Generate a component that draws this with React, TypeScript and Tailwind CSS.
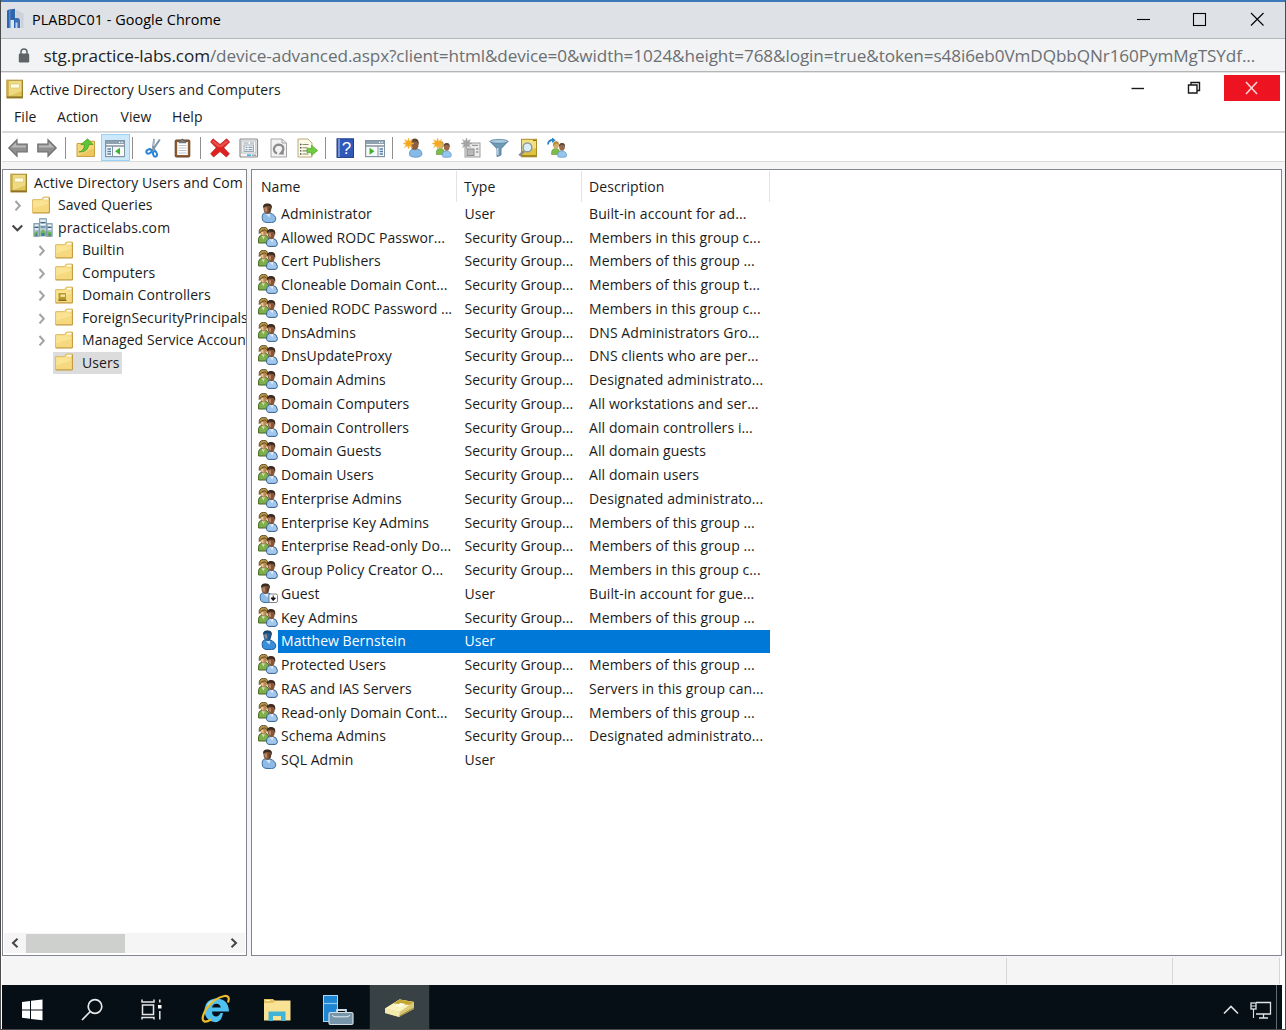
import React from "react";

type Kind = "user" | "group" | "guest" | "selected";

const GROUP = "Security Group...";

const rows: [Kind, string, string, string][] = [
  ["user", "Administrator", "User", "Built-in account for ad..."],
  ["group", "Allowed RODC Passwor...", GROUP, "Members in this group c..."],
  ["group", "Cert Publishers", GROUP, "Members of this group ..."],
  ["group", "Cloneable Domain Cont...", GROUP, "Members of this group t..."],
  ["group", "Denied RODC Password ...", GROUP, "Members in this group c..."],
  ["group", "DnsAdmins", GROUP, "DNS Administrators Gro..."],
  ["group", "DnsUpdateProxy", GROUP, "DNS clients who are per..."],
  ["group", "Domain Admins", GROUP, "Designated administrato..."],
  ["group", "Domain Computers", GROUP, "All workstations and ser..."],
  ["group", "Domain Controllers", GROUP, "All domain controllers i..."],
  ["group", "Domain Guests", GROUP, "All domain guests"],
  ["group", "Domain Users", GROUP, "All domain users"],
  ["group", "Enterprise Admins", GROUP, "Designated administrato..."],
  ["group", "Enterprise Key Admins", GROUP, "Members of this group ..."],
  ["group", "Enterprise Read-only Do...", GROUP, "Members of this group ..."],
  ["group", "Group Policy Creator O...", GROUP, "Members in this group c..."],
  ["guest", "Guest", "User", "Built-in account for gue..."],
  ["group", "Key Admins", GROUP, "Members of this group ..."],
  ["selected", "Matthew Bernstein", "User", ""],
  ["group", "Protected Users", GROUP, "Members of this group ..."],
  ["group", "RAS and IAS Servers", GROUP, "Servers in this group can..."],
  ["group", "Read-only Domain Cont...", GROUP, "Members of this group ..."],
  ["group", "Schema Admins", GROUP, "Designated administrato..."],
  ["user", "SQL Admin", "User", ""],
];

const tree = ["Builtin", "Computers", "Domain Controllers", "ForeignSecurityPrincipals", "Managed Service Accounts", "Users"];

/* ---------- people ---------- */

function Person({ x = 0, y = 0, body = "#8fbbe6", edge = "#3d6f9f", head = "#85593c", hair = "#3a2b21" }) {
  return (
    <g transform={`translate(${x} ${y})`}>
      <path d="M1.6 17 Q0 10.5 4 9.6 L8.6 9.6 Q14.6 11.6 14.8 16 Q14.6 19.3 10.6 19.4 L5 19.2 Q2.2 18.8 1.6 17Z" fill={body} stroke={edge} />
      <path d="M4.6 10.5 L8.4 14.5 L9.4 10.8Z" fill="#e6f1fa" opacity=".8" />
      <path d="M2.2 3.5 Q2.2 0.8 5.8 0.6 Q10.7 0.4 10.6 3.6 L10 7.5 Q8.8 10.8 6.4 10.8 Q3.6 10.6 2.8 7.5Z" fill={head} />
      <path d="M2.2 4.6 Q1.6 .5 6.2 .3 Q11.6 .2 10.9 5.6 L9.6 3.2 L5 2.8Z" fill={hair} />
      <path d="M7.6 4 L10.6 4.5 L9.4 9 L7.6 10.5Z" fill={hair} opacity=".55" />
      <path d="M3.2 4.4 L6 4.2 L6.2 8.6 L4.2 8.2Z" fill="#d9a983" opacity=".6" />
    </g>
  );
}

function UserIcon({ kind }: { kind: Kind }) {
  if (kind === "group") {
    return (
      <svg width="20" height="20" viewBox="0 0 20 20" className="mb-[2px]">
        <path d="M0.6 16 V11.5 Q1 8.6 4 8.4 H8 Q10.5 9 10.8 12 V16Z" fill="#7fae4b" stroke="#47661f" />
        <path d="M3.5 9 L5.5 12.5 L7 9Z" fill="#cfe3b4" />
        <path d="M1.6 3 Q2 .4 5.5 .4 Q9.4 .6 9.2 4 Q9 9.4 6 9.6 Q2.2 9.4 1.6 3Z" fill="#b98a52" />
        <path d="M1.2 6.5 Q.6 .3 5.6 .3 Q10.4 .3 9.4 5 L7 2.8 L4 3.6Z" fill="#b3954a" stroke="#4f3d1b" strokeWidth=".8" />
        <path d="M3 5H5.4L5.4 8.2L3.6 7.6Z" fill="#ecca9a" />
        <path d="M8.6 17.5 Q8.2 12.4 11.4 11.6 H15.4 Q19 12.4 19.4 16.6 Q19.4 19.3 17 19.4 H11 Q9 19.2 8.6 17.5Z" fill="#a3c8ee" stroke="#355f8b" />
        <path d="M12 12 L14.3 15.4 L15.4 12Z" fill="#e3f0fb" />
        <path d="M9.2 5 Q9.4 2.2 13 2.2 Q17.2 2.2 17 6 Q16.6 12 13.6 12.2 Q10 12 9.2 5Z" fill="#855539" />
        <path d="M9 6.5 Q8.6 1.9 13.2 1.9 Q18 1.9 17.2 8 L15.6 5 L11 4.6Z" fill="#3a2a20" />
        <path d="M10.4 6.2H13V10.2L11.2 9.2Z" fill="#c89573" opacity=".85" />
      </svg>
    );
  }
  if (kind === "selected") {
    return (
      <svg width="20" height="20" viewBox="0 0 20 20" className="mb-[2px]">
        <Person x={3} y={0.2} body="#3a8fdb" edge="#1c5d9d" head="#2a6499" hair="#1b466c" />
      </svg>
    );
  }
  return (
    <svg width="20" height="20" viewBox="0 0 20 20" className="mb-[2px]">
      <Person x={kind === "guest" ? 1 : 3} y={0.2} />
      {kind === "guest" && (
        <g>
          <rect x="11" y="11" width="8.5" height="8.5" rx="1.5" fill="#fff" stroke="#666" strokeWidth=".8" />
          <path d="M15.2 12.5v4M13 15l2.2 2.6L17.4 15Z" stroke="#111" fill="#111" strokeWidth="1" />
        </g>
      )}
    </svg>
  );
}

/* ---------- tree ---------- */

function Folder({ unit = false }) {
  return (
    <svg width="19" height="19" viewBox="0 0 19 19" className="shrink-0">
      <path d="M.7 16.8 V3.7 H9.4 L11.4 1.1 H17.3 V16.8Z" fill="#f8dc84" stroke="#d9b65a" />
      <path d="M1.2 4.5 H11 L13 6 H16.8 V16.3 H1.2Z" fill="#fbe394" />
      <path d="M1.2 12.5 L16.8 7.5 V16.3 H1.2Z" fill="#f4d172" opacity=".6" />
      <path d="M12 2.7h4.4" stroke="#fff" strokeWidth="1.6" />
      <path d="M.7 16.9H17.4V1.5" fill="none" stroke="#c09a40" strokeWidth="1" />
      {unit && (
        <g>
          <rect x="3.5" y="7" width="7.5" height="7.5" fill="#b79a2c" />
          <rect x="5.5" y="8.5" width="4.5" height="2.4" fill="#f3e6a0" />
          <path d="M3.5 14.3h8" stroke="#6f5d20" />
        </g>
      )}
    </svg>
  );
}

function Book({ className = "" }) {
  return (
    <svg width="18" height="20" viewBox="0 0 18 20" className={className}>
      <rect x="1" y="1.2" width="15.5" height="17.8" fill="#dfc65d" stroke="#a88b33" />
      <rect x=".5" y=".8" width="2" height="18" fill="#c7aa48" />
      <path d="M3 2h13v10L3 17Z" fill="#f0de8c" opacity=".8" />
      <rect x="4.5" y="5" width="9" height="4" fill="#fffbe0" stroke="#d8c070" strokeWidth=".6" />
      <path d="M1 18.2h15.5" stroke="#8d7226" strokeWidth="1.6" />
      <path d="M16.2 2v17" stroke="#9b7f2c" />
    </svg>
  );
}

function Domain() {
  return (
    <svg width="20" height="20" viewBox="0 0 20 20" className="shrink-0">
      <path d="M6.5 18V.5H13.5V18Z" fill="#b7ccd9" stroke="#7c97a8" strokeWidth=".8" />
      <path d="M.8 18.5V5.5H6.3V18.5ZM13.7 18.5V5.5H19.2V18.5Z" fill="#a9c0cf" stroke="#7893a6" strokeWidth=".8" />
      <path d="M7.5 3h5M7.5 6.5h5M2 7.5h3.4M2 11h3.4M15 7.5h3.4M15 11h3.4" stroke="#f4fafc" strokeWidth="1.4" />
      <path d="M7.5 4.6h5M7.5 9h5M1.5 9.3h4M14.5 9.3h4" stroke="#3f627c" strokeWidth="1.2" />
      <path d="M1.3 18V14.5L5 13V18ZM7.5 18V13.5L10 11.5L12.8 13.5V18ZM14.3 18V13L18.8 14.5V18Z" fill="#6cb854" />
      <path d="M8.5 18V15H11.5V18ZM2.5 18V15.5H4V18ZM15.8 18V15.5H17.5V18Z" fill="#4b7b9a" />
    </svg>
  );
}

function Chevron({ open = false, dark = false }) {
  return (
    <svg width="12" height="12" viewBox="0 0 12 12" fill="none" className="shrink-0" stroke={open || dark ? "#454545" : "#a3a3a3"} strokeWidth="2">
      <path d={open ? "M1.6 3.5L6.4 8.3L11.2 3.5" : dark ? "M3.5 1.8L8 6L3.5 10.2" : "M3.5 2L7.8 6.7L3.5 11.4"} />
    </svg>
  );
}

/* ---------- toolbar ---------- */

function Ico({ children, w = 20 }: { children: React.ReactNode; w?: number }) {
  return (
    <svg width={w} height="20" viewBox={`0 0 ${w} 20`} className="shrink-0" fill="none">
      {children}
    </svg>
  );
}

const Arrow = ({ flip = false }) => (
  <Ico>
    <g transform={flip ? "translate(20 0) scale(-1 1)" : undefined}>
      <path d="M.8 10L9 1.8V6H19.2V14H9V18.2Z" fill="#8f8f8f" stroke="#6f6f6f" strokeWidth="1.2" />
      <path d="M2.6 9.6L8.2 4.4V7.4H18V9.6Z" fill="#b9b9b9" />
    </g>
  </Ico>
);

const Divider = ({ className = "" }) => <span className={`h-[22px] w-px shrink-0 bg-[#8f8f8f] ${className}`} />;

function Star({ gray = false }) {
  return (
    <path
      d="M5.5 0L6.5 3.2L9.4 1.6L7.8 4.5L11 5.5L7.8 6.5L9.4 9.4L6.5 7.8L5.5 11L4.5 7.8L1.6 9.4L3.2 6.5L0 5.5L3.2 4.5L1.6 1.6L4.5 3.2Z"
      fill={gray ? "#a3a3a3" : "#f5a81c"}
      stroke={gray ? "#a3a3a3" : "#f5b84a"}
      strokeWidth=".6"
    />
  );
}

function Couple({ x = 0, y = 0 }) {
  return (
    <g transform={`translate(${x} ${y})`}>
      <path d="M0 12Q0 7.5 4 7.5Q8 7.5 8 12V13.5H0Z" fill="#7dbb4a" stroke="#5c9434" strokeWidth=".6" />
      <ellipse cx="4.4" cy="4.2" rx="2.8" ry="3.5" fill="#d3ac68" />
      <path d="M1.4 5Q1 .3 4.6 .3Q7.8 .5 7.3 4L5 2.2Z" fill="#b58a38" />
      <path d="M6 14.5Q5.8 10.2 10 9.8Q15 10.2 15 14.5Q15 16.3 12 16.3H8Q6 16.3 6 14.5Z" fill="#93c5ee" stroke="#5c93c4" strokeWidth=".7" />
      <ellipse cx="10.4" cy="6" rx="2.8" ry="3.8" fill="#98694a" />
      <path d="M7.3 6Q7 2 10.6 2Q14 2 13.3 6.5L12 4L9 4Z" fill="#5b4636" />
    </g>
  );
}

function Pane({ flip = false }) {
  return (
    <Ico>
      <rect x="0.6" y="2.6" width="19" height="16" fill="#f7f9fb" stroke="#8293a2" strokeWidth="1.2" />
      <rect x="1" y="3" width="18" height="3" fill="#8fa1b1" />
      <path d="M14 4.4h1.2M16.5 4.4h1.2" stroke="#fff" strokeWidth="1.4" />
      <path d="M1 8h18" stroke="#7a8b99" strokeWidth="1.4" />
      {flip ? (
        <g>
          <path d="M13 8V18" stroke="#8293a2" />
          <path d="M14.6 11h3.4M14.6 13.5h3.4M14.6 16h3.4" stroke="#557fa8" strokeWidth="1.3" />
          <path d="M4.5 9.7V16.7L9.5 13.2Z" fill="#3fb32b" />
        </g>
      ) : (
        <g>
          <path d="M7.5 8V18" stroke="#8293a2" />
          <path d="M2.4 11H6M2.4 13.5H6M2.4 16H6" stroke="#557fa8" strokeWidth="1.3" />
          <path d="M15 9.7V16.7L10 13.2Z" fill="#3fb32b" />
        </g>
      )}
    </Ico>
  );
}

function Toolbar() {
  return (
    <div className="flex h-[27px] shrink-0 items-center pl-[6px]">
      <Arrow />
      <span className="w-[9px]" />
      <Arrow flip />
      <Divider className="ml-[8px] mr-[10px]" />
      <Ico>
        <path d="M1 18.5V5.5H8L10 3.2H18.5V18.5Z" fill="#f4d778" stroke="#c9a23f" />
        <path d="M1.5 18L18 10V18Z" fill="#e9bf58" opacity=".7" />
        <path d="M3 14Q8 13 8.6 6.6H4.8L11.6 .8L17 6.6H12.8Q12 14.5 3 14Z" fill="#5fc437" stroke="#3d9a21" strokeWidth=".7" />
      </Ico>
      <div className="ml-[4.5px] flex h-[27px] w-[29px] items-center justify-center border border-[#99d1f5] bg-[#cce8fb]">
        <Pane />
      </div>
      <Divider className="ml-[2.5px] mr-[11px]" />
      <Ico>
        <path d="M10.2 1L9 9.5L11.2 13M15.8 1.5L8 13" stroke="#7e95a8" strokeWidth="2" />
        <path d="M10.4 1.5L9.5 8" stroke="#d4dfe8" strokeWidth=".8" />
        <ellipse cx="5" cy="13.4" rx="2.8" ry="2" transform="rotate(-25 5 13.4)" stroke="#2a83d6" strokeWidth="2" />
        <ellipse cx="11" cy="16" rx="1.9" ry="2.7" transform="rotate(-15 11 16)" stroke="#2a83d6" strokeWidth="2" />
      </Ico>
      <span className="w-[9px]" />
      <Ico>
        <rect x="2.2" y="2" width="14.6" height="17" rx="1" fill="#8d5c35" stroke="#6a4325" />
        <rect x="4.2" y="4" width="10.6" height="13" fill="#fff" />
        <path d="M5.5 7.5h8M5.5 10h8M5.5 12.5h8M5.5 15h8" stroke="#bcc3ca" />
        <path d="M6 4.8V2.6H8Q9.5-.6 11 2.6H13V4.8Z" fill="#777" stroke="#555" strokeWidth=".7" />
      </Ico>
      <Divider className="ml-[7px] mr-[9px]" />
      <Ico>
        <path d="M3 .8L10 6.4L16.6 .8L19.6 4L13.8 9.8L19.4 15.8L16.4 19L10 13.6L3.6 19L.6 15.8L6.2 9.8L.6 4Z" fill="#dc2322" stroke="#b91c1c" strokeWidth=".7" />
        <path d="M3.2 2L10 7.6L16.4 2.2L18 4L12 9H8L2 4Z" fill="#f26460" opacity=".7" />
      </Ico>
      <span className="w-[9px]" />
      <Ico>
        <rect x="1" y="1" width="17.5" height="18" rx="1" fill="#f4f4f4" stroke="#8b8b8b" strokeWidth="1.2" />
        <rect x="2.8" y="3" width="14" height="12" fill="#fff" stroke="#b5bcc2" />
        <rect x="5" y="7" width="9.5" height="6.5" fill="#f4f8fb" stroke="#97a7b4" />
        <path d="M4.5 5h5M11 5h4M6.5 9.4h2M9.5 9.4h4M6.5 11.6h2M9.5 11.6h4" stroke="#8a9aa7" strokeWidth="1.1" />
        <path d="M8 17.2h4" stroke="#3eb4e6" strokeWidth="1.6" />
        <path d="M13 17.2h4" stroke="#9aa3aa" strokeWidth="1.4" />
      </Ico>
      <span className="w-[10px]" />
      <Ico>
        <path d="M2 1H13L17.5 5V19H2Z" fill="#f3f3f3" stroke="#a5a5a5" />
        <path d="M13 1V5H17.5" stroke="#a5a5a5" />
        <path d="M8 15.5Q4.6 14 5 10.4Q6.2 6.6 9.8 6.6Q14.4 7 14.4 11Q14.2 12.6 13 14" stroke="#8c8c8c" strokeWidth="2.2" />
        <path d="M15 16.6H9.4L14 11Z" fill="#8c8c8c" />
      </Ico>
      <span className="w-[8px]" />
      <Ico w={21}>
        <path d="M1 1H11L15 5V19H1Z" fill="#fdfbe9" stroke="#b8aa78" />
        <path d="M3 6.5h1.4M3 9.7h1.4M3 12.9h1.4M3 16h1.4" stroke="#444" strokeWidth="1.4" />
        <path d="M5.5 6.5h6M5.5 9.7h5M5.5 12.9h5M5.5 16h6" stroke="#8b8b72" strokeWidth="1.1" />
        <path d="M10 10.4H14.6V7.4L20.6 12.5L14.6 17.4V14.6H10Z" fill="#6fcc3f" stroke="#49a323" strokeWidth=".7" />
      </Ico>
      <Divider className="ml-[7px] mr-[10px]" />
      <Ico>
        <rect x="1" y=".8" width="16.5" height="18.6" fill="#3159b8" stroke="#1f3c86" />
        <path d="M2 1H4V19H2Z" fill="#7593d8" />
        <text x="5.8" y="16" fontSize="17" fill="#fff" fontFamily="Liberation Sans, sans-serif">?</text>
      </Ico>
      <span className="w-[9px]" />
      <Pane flip />
      <Divider className="ml-[7px] mr-[10px]" />
      <Ico>
        <path d="M6.5 17Q6 11 11.4 10.6Q18.6 10.6 19 16Q18.6 19.2 13 19.2Q7.4 19.2 6.5 17Z" fill="#86b9e6" stroke="#5990c2" strokeWidth=".8" />
        <ellipse cx="11.6" cy="6.6" rx="4" ry="5.4" fill="#8c5e40" />
        <path d="M7.4 5Q8 .6 12 .6Q16.4 1 15.6 6.5L14 3.4H9Z" fill="#5a4536" />
        <Star />
      </Ico>
      <span className="w-[9px]" />
      <Ico>
        <Couple x={4.3} y={3} />
        <Star />
      </Ico>
      <span className="w-[9px]" />
      <Ico>
        <rect x="4" y="5" width="15" height="14" fill="#ececec" stroke="#9b9b9b" />
        <rect x="6" y="11" width="7" height="6.5" fill="#b9b9b9" stroke="#8b8b8b" />
        <path d="M11 7.4h6M15 11h2.4M15 14h2.4" stroke="#999" strokeWidth="1.4" />
        <Star gray />
      </Ico>
      <span className="w-[8px]" />
      <Ico>
        <path d="M1 3.4L8 10.8V18.6L12 17V10.8L19 3.4Z" fill="#6e9ab8" stroke="#47708f" strokeWidth=".8" />
        <ellipse cx="10" cy="3.4" rx="9" ry="2" fill="#a9c9dc" stroke="#54809f" strokeWidth=".8" />
        <path d="M8.8 10V17" stroke="#cde2ef" strokeWidth="1.2" />
      </Ico>
      <span className="w-[9px]" />
      <Ico>
        <rect x="3.5" y="1.3" width="15" height="17.5" fill="#dfc33f" stroke="#a98f26" />
        <path d="M4 2H18V10L4 14Z" fill="#f1df81" />
        <path d="M15 2.5h3M4 17.8h14" stroke="#8f7718" strokeWidth="1.2" />
        <path d="M1.4 17.6L6 13" stroke="#8c8c8c" strokeWidth="2.6" />
        <circle cx="9.4" cy="9.4" r="4.4" fill="#d9eef6" stroke="#8a9aa2" strokeWidth="1.5" />
      </Ico>
      <span className="w-[9px]" />
      <Ico>
        <Couple x={4.6} y={3} />
        <path d="M1 6.5Q1 2 6 2" stroke="#2c83c4" strokeWidth="1.8" />
        <path d="M5 -.6L8.6 2.2L5 5Z" fill="#2c83c4" />
      </Ico>
    </div>
  );
}

/* ---------- frames ---------- */

function BrowserChrome() {
  return (
    <div className="shrink-0 font-['Open_Sans',sans-serif]">
      <div className="flex h-[39px] items-center border-t-2 border-b border-t-[#3c78b8] border-b-[#b4b6ba] bg-[#dee1e6] pb-[2px] text-black">
        <svg width="20" height="22" viewBox="0 0 20 22" className="ml-[5px]">
          <path d="M1 2.5L3 1.5L9 .8V20H1Z" fill="#2e66ad" />
          <path d="M3.8 2V20" stroke="#7da0cf" strokeWidth=".8" />
          <path d="M9 10Q14 9 14 13V20H9Z" fill="#3d70b2" />
          <path d="M4.5 12H8V20H4.5Z" fill="#dce6f2" />
          <path d="M9.5 1.5L15 4V10H9.5ZM14.5 5H17.5V20H14.5Z" fill="#cdd2da" />
          <path d="M9.5 14.5H11.5V20H9.5Z" fill="#bfd1e8" />
        </svg>
        <span className="ml-[6px] mt-px whitespace-pre text-[14.4px] tracking-[0.06px]">PLABDC01 - Google Chrome</span>
        <svg width="130" height="20" viewBox="0 0 130 20" className="ml-auto mr-[20px]" fill="none" stroke="#000" strokeWidth="1.1">
          <path d="M2 10.5H15" />
          <rect x="58.5" y="4.5" width="12" height="12" />
          <path d="M116 4L128.5 16.5M128.5 4L116 16.5" />
        </svg>
      </div>
      <div className="flex h-[33px] items-center border-b border-[#b5b5b5] bg-[#f1f3f4] pl-[17px] pt-px">
        <svg width="12" height="15" viewBox="0 0 12 15" className="shrink-0">
          <path d="M3 6V4Q3 1 6 1Q9 1 9 4V6" fill="none" stroke="#5f6368" strokeWidth="1.5" />
          <rect x=".8" y="5.5" width="10.4" height="9" rx="1.2" fill="#5f6368" />
        </svg>
        <span className="ml-[13.5px] whitespace-pre text-[17.15px] tracking-[-0.1px] text-[#6b6f73]">
          <span className="text-[#202124]">stg.practice-labs.com</span>
          /device-advanced.aspx?client=html&amp;device=0&amp;width=1024&amp;height=768&amp;login=true&amp;token=s48i6eb0VmDQbbQNr160PymMgTSYdf...
        </span>
      </div>
    </div>
  );
}

function TreePanel() {
  return (
    <div className="flex w-[245px] shrink-0 flex-col overflow-hidden border border-[#82878f] bg-white p-px">
      <div className="flex flex-col pt-[0.6px]">
        <div className="flex h-[22.5px] items-center pl-[6px]">
          <Book className="shrink-0" />
          <span className="ml-[6px] whitespace-pre tracking-[0.1px]">Active Directory Users and Com</span>
        </div>
        <div className="flex h-[22.5px] items-center pl-[8px]">
          <Chevron />
          <span className="w-[8px]" />
          <Folder />
          <span className="ml-[7px] whitespace-pre">Saved Queries</span>
        </div>
        <div className="flex h-[22.5px] items-center pl-[7px]">
          <Chevron open />
          <span className="w-[10px]" />
          <Domain />
          <span className="ml-[5px] whitespace-pre tracking-[0.13px]">practicelabs.com</span>
        </div>
        {tree.map((name, i) => (
          <div key={name} className="flex h-[22.5px] items-center pl-[32px]">
            {name === "Users" ? <span className="w-[12px] shrink-0" /> : <Chevron />}
            <div className={name === "Users" ? "ml-[5px] flex h-[22px] items-center bg-[#dcdcdc] pl-[2px] pr-[3px]" : "ml-[7px] flex items-center"}>
              <Folder unit={i === 2} />
              <span className="ml-[8px] whitespace-pre">{name}</span>
            </div>
          </div>
        ))}
      </div>
      <div className="mb-px mt-auto flex h-[20px] items-center bg-[#f5f5f5] pl-[5px] pr-[5px]">
        <span className="flex rotate-180"><Chevron dark /></span>
        <span className="ml-[5px] h-[19px] w-[99px] bg-[#cdd0cd]" />
        <span className="ml-auto flex"><Chevron dark /></span>
      </div>
    </div>
  );
}

function ListPanel() {
  return (
    <div className="mr-[3px] flex-1 border border-[#82878f] bg-white p-px">
      <div className="flex h-[31px] items-center">
        <span className="flex h-full w-[204px] items-center border-r border-[#e3e3e3] pl-[8px]">Name</span>
        <span className="flex h-full w-[125px] items-center border-r border-[#e3e3e3] pl-[7px]">Type</span>
        <span className="flex h-full w-[188px] items-center border-r border-[#e3e3e3] pl-[7px]">Description</span>
      </div>
      {rows.map(([kind, name, type, desc]) => (
        <div key={name} className="flex h-[23.76px] w-[516.5px] items-center pl-[5px]">
          <UserIcon kind={kind} />
          <div className={kind === "selected" ? "flex h-full flex-1 items-center bg-[#0078d7] text-white" : "flex h-full flex-1 items-center"}>
            <span className="w-[186.5px] whitespace-pre pl-[3px] tracking-[0.04px]">{name}</span>
            <span className="w-[124.5px] whitespace-pre tracking-[0.02px]">{type}</span>
            <span className="whitespace-pre tracking-[0.09px]">{desc}</span>
          </div>
        </div>
      ))}
    </div>
  );
}

function Taskbar() {
  return (
    <div className="mr-[3px] flex h-[44px] shrink-0 items-center bg-[#070f16]">
      <svg width="60" height="44" viewBox="0 0 60 44" fill="#fff">
        <path d="M20 17L28 16V24.4H20ZM29 15.8L40.5 14.4V24.4H29ZM20 25.4H28V33.8L20 32.8ZM29 25.4H40.5V35.2L29 34Z" />
      </svg>
      <svg width="60" height="44" viewBox="0 0 60 44" fill="none" stroke="#e5e7e9" strokeWidth="1.7">
        <circle cx="33" cy="21.5" r="6.8" />
        <path d="M28.3 26.5L20 35" />
      </svg>
      <svg width="60" height="44" viewBox="0 0 60 44" fill="none" stroke="#e5e7e9" strokeWidth="1.5">
        <rect x="20.5" y="20" width="11" height="9.5" />
        <path d="M20 14.5V17H32V14.5M20 34.5V32.4H32V34.5M37.8 14.5V17.5M37.8 26V34.5" />
        <rect x="36" y="20" width="3.5" height="3.5" fill="#fff" stroke="none" />
      </svg>
      <svg width="60" height="44" viewBox="0 0 60 44" fill="none">
        <path d="M47 28H41Q39.5 37 33.5 37.2Q22.8 36 22.5 25.5Q23 14 34.5 13.5Q46.5 14 47 26.5H30Q30.3 31.5 34.2 31.5Q37 31.4 38.5 28Z" fill="#4fc1f0" />
        <path d="M30 22.5Q30.8 18.8 34.4 18.8Q38 18.9 38.7 22.5Z" fill="#070f16" />
        <path d="M25.5 20.5Q28 16 33.5 15.3" stroke="#a9e7fc" strokeWidth="1.5" />
        <path d="M46 17.5Q48.5 10.5 42.5 11Q33 12.5 24.5 23.5Q18 34.5 22.5 36.6Q25 37 29 34.5" stroke="#edbc2c" strokeWidth="2.2" />
      </svg>
      <svg width="60" height="44" viewBox="0 0 60 44">
        <path d="M22 14H30L32 15.5H48.5V35.5H22Z" fill="#f9e293" />
        <path d="M22 14H31L33 16L31 18H22Z" fill="#e5c35d" />
        <path d="M23.5 15.5H28" stroke="#fff4c8" />
        <path d="M26.5 36V26.5H43.5V36H39V31H31V36Z" fill="#3fb4d8" />
      </svg>
      <svg width="67" height="44" viewBox="0 0 67 44">
        <rect x="21.5" y="10.5" width="14" height="26" fill="#1f86d4" stroke="#a9d8f6" />
        <path d="M22 18.5H35" stroke="#8ccaf2" strokeWidth="1.2" />
        <path d="M35 28V25H44V28" fill="none" stroke="#c8dbe6" strokeWidth="1.8" />
        <rect x="27" y="27.5" width="24" height="12" rx="1.5" fill="#7895aa" stroke="#d0dde5" strokeWidth="1.2" />
        <path d="M30 30.5L33 31.8H45L48 30.5" fill="none" stroke="#e6eef3" />
      </svg>
      <div className="h-full w-[61px] border-x border-[#111a20] bg-[#384144]">
        <svg width="59" height="44" viewBox="0 0 59 44">
          <path d="M15 23.5L29.5 14.5L44 17V24L29 32L15 28Z" fill="#d9c878" />
          <path d="M15 23.5L29.5 14.5L44 17L29.5 27Z" fill="#fbf3bd" />
          <path d="M15 23.5L29.5 27V32L15 28Z" fill="#f3e8ae" />
          <path d="M23.5 18.5L29.5 14.5L44 17L39.5 20Z" fill="#c4a632" />
          <path d="M25.5 20.5L30.5 18L35.5 19L30.5 22Z" fill="#fffce8" />
          <path d="M29.5 31L44 23" stroke="#98822d" />
        </svg>
      </div>
      <svg width="58" height="44" viewBox="0 0 58 44" className="ml-auto shrink-0" fill="none" stroke="#dfe3e6" strokeWidth="1.6">
        <path d="M5 28.5L12 21.5L19 28.5" />
        <path d="M37 17.5H51.5V29H37M44.5 29V33M40 33H49" strokeWidth="1.3" />
        <rect x="32" y="18" width="5" height="6" strokeWidth="1.3" />
        <path d="M32 21H37M34.5 24V33" strokeWidth="1.1" />
        <path d="M57.5 0V44" stroke="#606a71" strokeWidth="1" />
      </svg>
      <span className="w-[5px]" />
    </div>
  );
}

export default function App() {
  return (
    <div className="flex h-[1030px] w-[1286px] flex-col overflow-hidden border-x border-b border-[#4b4b4b] bg-white">
      <BrowserChrome />
      <div className="flex min-h-0 flex-1 flex-col border-t border-[#e4e4e4] pl-px font-['Open_Sans',sans-serif] text-[14px] leading-[20px] tracking-[0.07px] text-[#1b1b1b]">
        <div className="flex h-[32px] shrink-0">
          <Book className="ml-[4px] mt-[6px]" />
          <span className="ml-[6px] mt-[7px] whitespace-pre">Active Directory Users and Computers</span>
          <svg width="100" height="30" viewBox="0 0 100 30" className="ml-auto" fill="none" stroke="#1a1a1a" strokeWidth="1.4">
            <path d="M7.5 15.5H20" />
            <path d="M64.5 12H73V20H64.5ZM67 12V9.5H75.5V17.5H73" />
          </svg>
          <div className="mr-[5px] mt-[2px] flex h-[26px] w-[56px] items-center justify-center bg-[#ee1320]">
            <svg width="14" height="14" viewBox="0 0 14 14" stroke="#fbd5d7" strokeWidth="1.6">
              <path d="M1 1L12 13M12 1L1 13" />
            </svg>
          </div>
        </div>
        <div className="flex h-[28px] shrink-0 items-start border-b-2 border-[#d9d9d9] pl-[12px] pt-[2px]">
          <span className="w-[43px]">File</span>
          <span className="w-[63.5px]">Action</span>
          <span className="w-[51.5px]">View</span>
          <span>Help</span>
        </div>
        <div className="flex h-[29px] shrink-0 items-center border-b border-[#dadada] pt-px">
          <Toolbar />
        </div>
        <div className="flex min-h-0 flex-1 gap-[4px] bg-[#f5f5f5] pt-[7px]">
          <TreePanel />
          <ListPanel />
        </div>
        <div className="mr-[5px] flex h-[29px] shrink-0 justify-end bg-[#f5f5f5] pt-[2px]">
          <span className="h-[26px] w-[166px] border-l border-[#d5d5d5]" />
          <span className="h-[26px] w-[108px] border-x border-[#d5d5d5]" />
        </div>
        <Taskbar />
      </div>
    </div>
  );
}
